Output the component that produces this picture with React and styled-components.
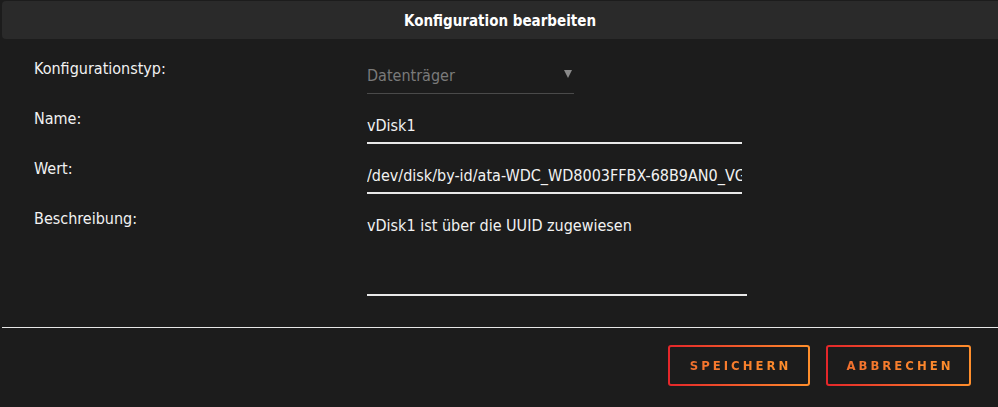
import React, { useState } from 'react';
import styled, { createGlobalStyle } from 'styled-components';

const GlobalStyle = createGlobalStyle`
  html, body {
    margin: 0;
    padding: 0;
    background: #1c1c1c;
  }
  * {
    box-sizing: border-box;
  }
`;

const Page = styled.div`
  min-height: 100vh;
  background: #1c1c1c;
  padding: 1px 0 0 2px;
  font-family: "DejaVu Sans Condensed", "DejaVu Sans", sans-serif;
  color: #f2f2f2;
`;

const Header = styled.div`
  height: 38px;
  background: #2a2a2a;
  border-radius: 4px 0 0 4px;
  display: flex;
  align-items: center;
  justify-content: center;
  padding-top: 1px;
  font-size: 15px;
  font-weight: 700;
  color: #ffffff;
`;

const Form = styled.div`
  display: flex;
  flex-direction: column;
  gap: 15px;
  padding: 20px 0 0 32px;
`;

const Row = styled.div`
  display: flex;
  align-items: flex-start;
`;

const Label = styled.div`
  width: 333px;
  font-size: 16px;
  line-height: 20px;
  color: #f2f2f2;
`;

const Field = styled.div`
  position: relative;
  width: ${(p) => p.$width}px;
  height: ${(p) => p.$height || 35}px;
  padding-top: 7px;
  border-bottom: ${(p) => (p.$muted ? '1px solid #4a4a4a' : '2px solid #e8e8e8')};
  font-size: 16px;
  line-height: 20px;
  color: ${(p) => (p.$muted ? '#7a7a7a' : '#f2f2f2')};
  white-space: nowrap;
  overflow: hidden;
`;

const Arrow = styled.span`
  position: absolute;
  right: 2px;
  top: 11px;
  width: 0;
  height: 0;
  border-left: 4px solid transparent;
  border-right: 4px solid transparent;
  border-top: 8px solid #8a8a8a;
`;

const Separator = styled.div`
  margin-top: 31px;
  height: 1px;
  background: #e6e6e6;
`;

const Footer = styled.div`
  display: flex;
  justify-content: flex-end;
  gap: 16px;
  padding: 17px 27px 0 0;
`;

const Button = styled.button`
  width: ${(p) => p.$width}px;
  height: 41px;
  border: 2px solid transparent;
  border-radius: 3px;
  background: linear-gradient(#1c1c1c, #1c1c1c) padding-box,
    linear-gradient(90deg, #e4262a, #ff8f2c) border-box;
  cursor: pointer;
  font-family: "DejaVu Sans Condensed", "DejaVu Sans", sans-serif;
  font-size: 13px;
  font-weight: 700;
  letter-spacing: 3px;
  padding: 0 0 0 3px;
`;

const ButtonText = styled.span`
  background: linear-gradient(90deg, #f2702e, #ff8f2c);
  -webkit-background-clip: text;
  background-clip: text;
  color: transparent;
`;

export default function App() {
  const [name] = useState('vDisk1');
  const [value] = useState('/dev/disk/by-id/ata-WDC_WD8003FFBX-68B9AN0_VGH3MRGL');
  const [desc] = useState('vDisk1 ist über die UUID zugewiesen');

  return (
    <Page>
      <GlobalStyle />
      <Header>Konfiguration bearbeiten</Header>
      <Form>
        <Row>
          <Label>Konfigurationstyp:</Label>
          <Field $width={207} $muted>
            Datenträger
            <Arrow />
          </Field>
        </Row>
        <Row>
          <Label>Name:</Label>
          <Field $width={375}>{name}</Field>
        </Row>
        <Row>
          <Label>Wert:</Label>
          <Field $width={375}>{value}</Field>
        </Row>
        <Row>
          <Label>Beschreibung:</Label>
          <Field $width={380} $height={87}>{desc}</Field>
        </Row>
      </Form>
      <Separator />
      <Footer>
        <Button $width={142}><ButtonText>SPEICHERN</ButtonText></Button>
        <Button $width={145}><ButtonText>ABBRECHEN</ButtonText></Button>
      </Footer>
    </Page>
  );
}
